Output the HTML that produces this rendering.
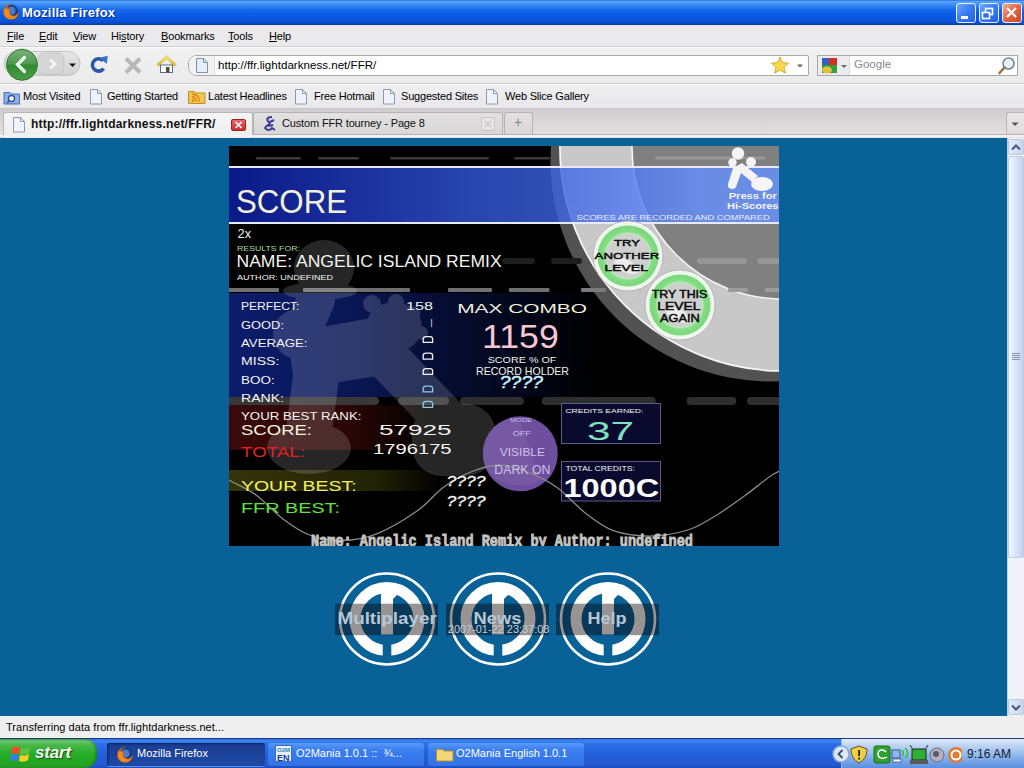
<!DOCTYPE html>
<html><head><meta charset="utf-8">
<style>
*{margin:0;padding:0;box-sizing:border-box}
html,body{width:1024px;height:768px;overflow:hidden;background:#086298;font-family:"Liberation Sans",sans-serif}
.a{position:absolute}
#title{left:0;top:0;width:1024px;height:25px;background:linear-gradient(#1a52d8 0,#5aa6fc 1px,#4a9af8 3px,#3282f2 6px,#1866e8 10px,#0a5ae4 15px,#0a56de 20px,#0a4ccc 23px,#0a3aa0 25px)}
#title .t{left:22px;top:5px;color:#fff;font-weight:bold;font-size:13px;text-shadow:1px 1px 0 #0a2c8c;letter-spacing:0.2px}
.wbtn{top:3px;width:20px;height:20px;border:1px solid #e8f0ff;border-radius:3px;background:linear-gradient(135deg,#6aa8ff,#3478f2 55%,#2460e0)}
#menu{left:0;top:25px;width:1024px;height:22px;background:#eae9ec;border-bottom:1px solid #d2d0d0}
#menu span{position:absolute;top:5px;font-size:11px;letter-spacing:-0.15px;color:#000}
#nav{left:0;top:47px;width:1024px;height:37px;background:linear-gradient(#f2f1f1,#ecebeb);border-bottom:1px solid #cfcdcd;box-shadow:inset 0 1px 0 #fbfbfb}
#bm{left:0;top:84px;width:1024px;height:25px;background:linear-gradient(#efeef0,#e8e7ea);border-bottom:1px solid #c8c6c6;box-shadow:inset 0 1px 0 #fbfbfb}
#bm span{position:absolute;top:6px;font-size:11px;letter-spacing:-0.2px;color:#000}
#tabs{left:0;top:109px;width:1024px;height:29px;background:linear-gradient(#cfcdcd,#e4e2e2)}
#content{left:0;top:138px;width:1007px;height:578px;background:#086298}
#sb{left:1007px;top:138px;width:17px;height:578px;background:#f0f3fa}
#status{left:0;top:716px;width:1024px;height:22px;background:#f0efef}
#status span{position:absolute;left:6px;top:5px;font-size:11px;letter-spacing:0.05px;color:#000}
#task{left:0;top:738px;width:1024px;height:30px;background:linear-gradient(#2f6de0 0,#3d86f5 2px,#2a6ee6 5px,#2460da 15px,#2358d0 26px,#1a48b8 30px);border-top:1px solid #1a3a80}
#game{left:229px;top:146px;width:550px;height:400px;background:#000;overflow:hidden}
</style></head><body>
<div id="title" class="a"><svg class="a" style="left:2px;top:3px" width="18" height="18"><circle cx="9" cy="9" r="7.5" fill="#1a3a8a"/><circle cx="9.5" cy="7.5" r="4" fill="#4a7ac8"/><path d="M9 1.5 C4 1.5 1.5 5.5 1.5 9 C1.5 13.5 5 16.5 9 16.5 C13.5 16.5 16.5 13 16.5 9.5 C15 12.5 12 13.5 10 12.5 C7 11.5 6.5 8.5 8 6.5 C6 6.5 5 5.5 5.5 4 C4.5 4.5 4 5 3.8 5.8 C4.5 3.5 6.5 1.8 9 1.5Z" fill="#f08a20" stroke="#c05a10" stroke-width="0.6"/></svg><div class="t a">Mozilla Firefox</div>
<div class="wbtn a" style="left:956px"></div><div class="wbtn a" style="left:979px"></div><div class="wbtn a" style="left:1002px;background:linear-gradient(135deg,#f4a890,#e0603c 55%,#c84a28)"></div>
<svg class="a" style="left:956px;top:3px" width="70" height="21"><rect x="5" y="13" width="7" height="3" fill="#fff"/><rect x="29.5" y="5.5" width="7" height="6" fill="none" stroke="#fff" stroke-width="1.6"/><rect x="26.5" y="9.5" width="7" height="6" fill="#2f70ee" stroke="#fff" stroke-width="1.6"/><path d="M51 5 L60 14 M60 5 L51 14" stroke="#fff" stroke-width="2.2"/></svg>
</div>
<div id="menu" class="a">
<span style="left:7px"><u>F</u>ile</span><span style="left:39px"><u>E</u>dit</span><span style="left:73px"><u>V</u>iew</span><span style="left:111px">Hi<u>s</u>tory</span><span style="left:161px"><u>B</u>ookmarks</span><span style="left:228px"><u>T</u>ools</span><span style="left:269px"><u>H</u>elp</span>
</div>
<div id="nav" class="a">
<svg class="a" style="left:0;top:0" width="190" height="36" viewBox="0 47 190 36">
<defs>
<linearGradient id="gb" x1="0" y1="0" x2="0" y2="1"><stop offset="0" stop-color="#7ab07a"/><stop offset="0.48" stop-color="#4d9a4d"/><stop offset="0.5" stop-color="#2f8a2f"/><stop offset="1" stop-color="#4aa04a"/></linearGradient>
<linearGradient id="gf" x1="0" y1="0" x2="0" y2="1"><stop offset="0" stop-color="#e6e6e6"/><stop offset="1" stop-color="#d2d2d2"/></linearGradient>
<linearGradient id="gh" x1="0" y1="0" x2="0" y2="1"><stop offset="0" stop-color="#f0dc80"/><stop offset="1" stop-color="#d8b840"/></linearGradient>
</defs>
<rect x="4" y="51.5" width="76" height="24" rx="12" fill="url(#gf)" stroke="#c4c4c4"/>
<rect x="38" y="53" width="26" height="21" rx="6" fill="#d6d6d6" stroke="#c8c8c8"/>
<path d="M50 59.5 L55 64 L50 68.5" stroke="#f4f4f4" stroke-width="2.6" fill="none"/>
<path d="M69 63.5 h7 l-3.5 3.5z" fill="#111"/>
<circle cx="22" cy="64.8" r="16.5" fill="#d8f0d8"/>
<circle cx="22" cy="64.8" r="15.5" fill="url(#gb)" stroke="#3d6d3d" stroke-width="1"/>
<path d="M24.5 57.5 L17.5 64.5 L24.5 71.5" stroke="#f0fff0" stroke-width="3.2" fill="none" stroke-linecap="round"/>
<path d="M103.2 60.8 A6.2 6.2 0 1 0 103.6 68.6" stroke="#2a58a6" stroke-width="3.6" fill="none"/>
<path d="M99.5 57.8 L107.8 55.8 L106.8 64 Z" fill="#3674c8"/>
<path d="M126 58.5 L140 72.5 M140 58.5 L126 72.5" stroke="#b8b8b8" stroke-width="4"/>
<path d="M157.5 65.5 L166.5 57 L175.5 65.5" stroke="url(#gh)" stroke-width="3.4" fill="none"/>
<rect x="160.5" y="65" width="12" height="7.5" fill="#fff" stroke="#5a6a8a" stroke-width="1"/>
<rect x="166" y="67" width="3.5" height="5.5" fill="#5a4a3a"/>
</svg>
<div class="a" style="left:188px;top:8px;width:621px;height:21px;background:#fff;border:1px solid #a8a8a8;border-radius:9px 2px 2px 9px"></div>
<div class="a" style="left:189px;top:9px;width:26px;height:19px;background:#f2f2f2;border-right:1px solid #ddd;border-radius:8px 0 0 8px"></div>
<svg class="a" style="left:195px;top:10px" width="14" height="17"><path d="M1.5 1.5 h7 l4 4 v10 h-11z" fill="#e6eefa" stroke="#8090a8"/><path d="M8.5 1.5 v4 h4" fill="none" stroke="#8090a8"/></svg>
<div class="a" style="left:218px;top:11px;font-size:11.6px;color:#000">http://ffr.lightdarkness.net/FFR/</div>
<svg class="a" style="left:769px;top:8px" width="40" height="20"><path d="M11 2 L13.6 7.6 L19.6 8.2 L15.1 12.2 L16.4 18.2 L11 15.1 L5.6 18.2 L6.9 12.2 L2.4 8.2 L8.4 7.6 Z" fill="#f6d84a" stroke="#c0a030" stroke-width="0.8"/><path d="M28 9.5 h6 l-3 3z" fill="#666"/></svg>
<div class="a" style="left:817px;top:8px;width:201px;height:21px;background:#fff;border:1px solid #a8a8a8"></div>
<div class="a" style="left:818px;top:9px;width:32px;height:19px;background:#ececec;border-right:1px solid #ddd"></div>
<svg class="a" style="left:820px;top:9px" width="30" height="19"><rect x="2" y="2" width="7" height="7" fill="#3060c0"/><rect x="9" y="2" width="8" height="14" fill="#d03020"/><rect x="2" y="9" width="15" height="8" fill="#30a040"/><ellipse cx="7" cy="14" rx="5" ry="3.5" fill="#e8c040"/><path d="M21 9 h6 l-3 3z" fill="#666"/></svg>
<div class="a" style="left:854px;top:11px;font-size:11.5px;color:#8a8a8a">Google</div>
<svg class="a" style="left:997px;top:9px" width="20" height="20"><circle cx="11.5" cy="7.5" r="5.5" fill="#e8f4fc" stroke="#6a8aa8" stroke-width="1.6"/><path d="M7.5 11.5 L2.5 17" stroke="#a07040" stroke-width="2.6" stroke-linecap="round"/></svg>
</div>
<div id="bm" class="a">
<svg class="a" style="left:3px;top:5px" width="18" height="16"><path d="M1 3.5 h6 l1.5 1.5 h8 v10 h-15.5z" fill="#8ab0e8" stroke="#4a70b0"/><circle cx="8.5" cy="9.5" r="3" fill="#fff" stroke="#3050a0" stroke-width="1.4"/><path d="M6.5 11.5 L4 14" stroke="#3050a0" stroke-width="1.6"/></svg>
<span style="left:23px">Most Visited</span>
<svg class="a" style="left:89px;top:4px" width="14" height="17"><path d="M1.5 1.5 h7 l4 4 v10.5 h-11z" fill="#eef3fc" stroke="#8a9ab8"/><path d="M8.5 1.5 v4 h4" fill="none" stroke="#8a9ab8"/></svg><span style="left:107px">Getting Started</span>
<svg class="a" style="left:188px;top:5px" width="18" height="15"><path d="M0.5 2.5 h6 l1.5 1.5 h9 v10.5 h-16.5z" fill="#f0c850" stroke="#c09020"/><circle cx="5" cy="11.5" r="1.3" fill="#e08010"/><path d="M4 8 a4 4 0 0 1 4.5 4.5 M4 5 a7 7 0 0 1 7.5 7.5" stroke="#e08010" stroke-width="1.4" fill="none"/></svg>
<span style="left:208px">Latest Headlines</span>
<svg class="a" style="left:294px;top:4px" width="14" height="17"><path d="M1.5 1.5 h7 l4 4 v10.5 h-11z" fill="#eef3fc" stroke="#8a9ab8"/><path d="M8.5 1.5 v4 h4" fill="none" stroke="#8a9ab8"/></svg><span style="left:314px">Free Hotmail</span>
<svg class="a" style="left:382px;top:4px" width="14" height="17"><path d="M1.5 1.5 h7 l4 4 v10.5 h-11z" fill="#eef3fc" stroke="#8a9ab8"/><path d="M8.5 1.5 v4 h4" fill="none" stroke="#8a9ab8"/></svg><span style="left:401px">Suggested Sites</span>
<svg class="a" style="left:485px;top:4px" width="14" height="17"><path d="M1.5 1.5 h7 l4 4 v10.5 h-11z" fill="#eef3fc" stroke="#8a9ab8"/><path d="M8.5 1.5 v4 h4" fill="none" stroke="#8a9ab8"/></svg><span style="left:505px">Web Slice Gallery</span>
</div>
<div id="tabs" class="a">
<div class="a" style="left:3px;top:3px;width:250px;height:26px;background:linear-gradient(#f6f5f5,#efeeee);border:1px solid #b8b6b6;border-bottom:none;border-radius:3px 3px 0 0"></div>
<svg class="a" style="left:12px;top:7px" width="14" height="17"><path d="M1.5 1.5 h7 l4 4 v10.5 h-11z" fill="#eef3fc" stroke="#8a9ab8"/><path d="M8.5 1.5 v4 h4" fill="none" stroke="#8a9ab8"/></svg>
<div class="a" style="left:31px;top:8px;font-size:12px;font-weight:bold;letter-spacing:0.2px;color:#111">http://ffr.lightdarkness.net/FFR/</div>
<div class="a" style="left:231px;top:10px;width:15px;height:12px;background:linear-gradient(#e86a6a,#c83030);border:1px solid #a02020;border-radius:2px"></div>
<svg class="a" style="left:231px;top:10px" width="15" height="12"><path d="M4.5 3 L10.5 9 M10.5 3 L4.5 9" stroke="#fff" stroke-width="1.6"/></svg>
<div class="a" style="left:253px;top:3px;width:250px;height:23px;background:linear-gradient(#e2e0e0,#d8d6d6);border:1px solid #b4b2b2;border-bottom:none;border-radius:3px 3px 0 0"></div>
<svg class="a" style="left:262px;top:6px" width="16" height="18"><path d="M10 2 C5 2 4 5 7 7 C10 9 4 10 3 13 C5 16 9 15 10 13 L13 15 M8 7 L12 5 M6 11 L11 10" stroke="#3a3a9a" stroke-width="2" fill="none"/></svg>
<div class="a" style="left:282px;top:8px;font-size:11px;letter-spacing:-0.15px;color:#111">Custom FFR tourney - Page 8</div>
<div class="a" style="left:481px;top:8px;width:14px;height:14px;border:1px solid #c8c6c6;border-radius:2px;background:#e6e4e4"></div>
<svg class="a" style="left:481px;top:8px" width="14" height="14"><path d="M4 4 L10 10 M10 4 L4 10" stroke="#c8c6c6" stroke-width="1.5"/></svg>
<div class="a" style="left:504px;top:3px;width:29px;height:23px;background:linear-gradient(#e2e0e0,#d8d6d6);border:1px solid #b4b2b2;border-bottom:none;border-radius:3px 3px 0 0"></div>
<div class="a" style="left:514px;top:5px;font-size:14px;color:#888">+</div>
<div class="a" style="left:1006px;top:3px;width:18px;height:23px;background:linear-gradient(#e8e6e6,#dedcdc);border:1px solid #b8b6b6;border-right:none;border-bottom:none;border-radius:3px 0 0 0"></div>
<svg class="a" style="left:1011px;top:13px" width="8" height="5"><path d="M0.5 0.5 h7 l-3.5 3.5z" fill="#555"/></svg>
<div class="a" style="left:253px;top:25px;width:771px;height:1px;background:#b4b2b2"></div><div class="a" style="left:0;top:26px;width:1024px;height:2px;background:#f2f2f2"></div>
</div>
<div id="content" class="a"></div>
<div id="sb" class="a">
<div class="a" style="left:0;top:0;width:1px;height:578px;background:#b8d4f0"></div>
<div class="a" style="left:1px;top:1px;width:16px;height:16px;border:1px solid #c0c8d8;border-radius:2px;background:linear-gradient(90deg,#e4ecfa,#c8d4ec)"></div>
<svg class="a" style="left:4px;top:6px" width="10" height="7"><path d="M1 5.5 L5 1.5 L9 5.5" stroke="#4a5a7a" stroke-width="2" fill="none"/></svg>
<div class="a" style="left:1px;top:18px;width:16px;height:402px;border:1px solid #c0cce4;border-radius:2px;background:linear-gradient(90deg,#f2f6fe,#d4e0f6 60%,#c4d2ee)"></div>
<div class="a" style="left:5px;top:215px;width:8px;height:7px;border-top:1px solid #8a96b0;border-bottom:1px solid #8a96b0"></div>
<div class="a" style="left:5px;top:217px;width:8px;height:3px;border-top:1px solid #8a96b0;border-bottom:1px solid #8a96b0"></div>
<div class="a" style="left:1px;top:561px;width:16px;height:16px;border:1px solid #c0c8d8;border-radius:2px;background:linear-gradient(90deg,#e4ecfa,#c8d4ec)"></div>
<svg class="a" style="left:4px;top:566px" width="10" height="7"><path d="M1 1.5 L5 5.5 L9 1.5" stroke="#4a5a7a" stroke-width="2" fill="none"/></svg>
</div><svg class="a" style="left:327px;top:564px" width="120" height="110" viewBox="327 564 120 110"><ellipse cx="387" cy="619" rx="47" ry="45.5" fill="none" stroke="#fff" stroke-width="2.6"/><ellipse cx="387" cy="619" rx="32" ry="31.5" fill="none" stroke="#fff" stroke-width="11"/><rect x="382.7" y="639" width="8.6" height="18" fill="#086298"/><rect x="381" y="585" width="12" height="49.5" fill="#fff"/><path d="M392 591.5 L399 593 L392 600Z" fill="#fff"/><rect x="335" y="603.7" width="103" height="31.5" fill="rgb(12,0,0)" opacity="0.42"/><text x="337.5" y="623.8" font-family="Liberation Sans" font-weight="bold" font-size="17.4" fill="#b6c8d6" textLength="99.19999999999999" lengthAdjust="spacingAndGlyphs">Multiplayer</text></svg><svg class="a" style="left:438px;top:564px" width="120" height="110" viewBox="438 564 120 110"><ellipse cx="498" cy="619" rx="47" ry="45.5" fill="none" stroke="#fff" stroke-width="2.6"/><ellipse cx="498" cy="619" rx="32" ry="31.5" fill="none" stroke="#fff" stroke-width="11"/><rect x="493.7" y="639" width="8.6" height="18" fill="#086298"/><rect x="492" y="585" width="12" height="49.5" fill="#fff"/><path d="M503 591.5 L510 593 L503 600Z" fill="#fff"/><rect x="446" y="603.7" width="103" height="31.5" fill="rgb(12,0,0)" opacity="0.42"/><text x="473.6" y="623.8" font-family="Liberation Sans" font-weight="bold" font-size="17.4" fill="#b6c8d6" textLength="47.69999999999993" lengthAdjust="spacingAndGlyphs">News</text><text x="447.8" y="633.4" font-family="Liberation Sans" font-size="10.3" fill="#c4ccd4" textLength="101.6" lengthAdjust="spacingAndGlyphs">2007-01-22 23:37:08</text></svg><svg class="a" style="left:548px;top:564px" width="120" height="110" viewBox="548 564 120 110"><ellipse cx="608" cy="619" rx="47" ry="45.5" fill="none" stroke="#fff" stroke-width="2.6"/><ellipse cx="608" cy="619" rx="32" ry="31.5" fill="none" stroke="#fff" stroke-width="11"/><rect x="603.7" y="639" width="8.6" height="18" fill="#086298"/><rect x="602" y="585" width="12" height="49.5" fill="#fff"/><path d="M613 591.5 L620 593 L613 600Z" fill="#fff"/><rect x="556" y="603.7" width="103" height="31.5" fill="rgb(12,0,0)" opacity="0.42"/><text x="587.5" y="623.8" font-family="Liberation Sans" font-weight="bold" font-size="17.4" fill="#b6c8d6" textLength="39.10000000000002" lengthAdjust="spacingAndGlyphs">Help</text></svg><svg class="a" style="left:229px;top:146px" width="550" height="400" viewBox="229 146 550 400">
<defs>
<linearGradient id="band" x1="229" y1="0" x2="779" y2="0" gradientUnits="userSpaceOnUse">
<stop offset="0" stop-color="#0c20aa"/><stop offset="0.311" stop-color="#2846cd"/><stop offset="0.456" stop-color="#3458da"/><stop offset="0.591" stop-color="#3c62e1"/><stop offset="0.855" stop-color="#648fff"/><stop offset="1" stop-color="#6491ff"/>
</linearGradient>
<linearGradient id="navy" x1="229" y1="0" x2="600" y2="0" gradientUnits="userSpaceOnUse">
<stop offset="0" stop-color="#0c1c6c"/><stop offset="0.35" stop-color="#091652"/><stop offset="0.6" stop-color="#050c30"/><stop offset="1" stop-color="#000"/>
</linearGradient>
<linearGradient id="red" x1="229" y1="0" x2="430" y2="0" gradientUnits="userSpaceOnUse">
<stop offset="0" stop-color="#3c0a0a"/><stop offset="0.6" stop-color="#2a0606"/><stop offset="1" stop-color="#000"/>
</linearGradient>
<linearGradient id="olive" x1="229" y1="0" x2="440" y2="0" gradientUnits="userSpaceOnUse">
<stop offset="0" stop-color="#34340a"/><stop offset="0.7" stop-color="#222206"/><stop offset="1" stop-color="#000"/>
</linearGradient>
<radialGradient id="grn" cx="0.5" cy="0.5" r="0.5">
<stop offset="0" stop-color="#cfcfcf"/><stop offset="0.62" stop-color="#cfcfcf"/><stop offset="0.64" stop-color="#b8f0b8"/><stop offset="0.7" stop-color="#86dc86"/><stop offset="0.86" stop-color="#7ad87a"/><stop offset="0.88" stop-color="#e8f8e8"/><stop offset="1" stop-color="#f4f4f4"/>
</radialGradient>
</defs>
<rect x="229" y="146" width="550" height="400" fill="#000"/>
<rect x="229" y="293" width="371" height="104" fill="url(#navy)"/>
<circle cx="771" cy="161" r="220.5" fill="#525252"/>
<circle cx="783" cy="148" r="223" fill="#c8c8c8" stroke="#f4f4f4" stroke-width="1.8"/>
<circle cx="783" cy="148" r="151" fill="#808080" stroke="#f4f4f4" stroke-width="1.6"/>
<rect x="256" y="157" width="45" height="2.5" rx="1.25" fill="#3a3a3a"/>
<rect x="318" y="157" width="41" height="2.5" rx="1.25" fill="#3a3a3a"/>
<rect x="390" y="157" width="99" height="2.5" rx="1.25" fill="#3a3a3a"/>
<rect x="514" y="157" width="36" height="2.5" rx="1.25" fill="#3a3a3a"/>
<rect x="655" y="156.5" width="111" height="3.0" rx="1.5" fill="#979797"/>
<rect x="502" y="258" width="33" height="6" rx="3.0" fill="#1e1e1e"/>
<rect x="551" y="258" width="31" height="6" rx="3.0" fill="#1e1e1e"/>
<rect x="697" y="258" width="50" height="6" rx="3.0" fill="#969696"/>
<rect x="757.5" y="258" width="32.5" height="6" rx="3.0" fill="#969696"/>
<rect x="220" y="288" width="59" height="4" rx="1" fill="#707070"/>
<rect x="303" y="288" width="107" height="4" rx="1" fill="#707070"/>
<rect x="448" y="288" width="44" height="4" rx="1" fill="#707070"/>
<rect x="509" y="288" width="40.5" height="4" rx="1" fill="#707070"/>
<rect x="581" y="288" width="25" height="4" rx="1" fill="#7a7a7a"/>
<rect x="728" y="288" width="20" height="4" rx="1" fill="#9c9c9c"/>
<rect x="765" y="288" width="25" height="4" rx="1" fill="#9c9c9c"/>
<rect x="220" y="397" width="159" height="8" rx="4.0" fill="#383838"/>
<rect x="398" y="397" width="51" height="8" rx="4.0" fill="#343434"/>
<rect x="460" y="397" width="64" height="8" rx="4.0" fill="#2e2e2e"/>
<rect x="541.6" y="397" width="114.10000000000002" height="8" rx="4.0" fill="#2e2e2e"/>
<rect x="686.6" y="397" width="49.69999999999993" height="8" rx="4.0" fill="#2e2e2e"/>
<rect x="747" y="397" width="43" height="8" rx="4.0" fill="#2e2e2e"/>
<rect x="229" y="405" width="201" height="45" fill="url(#red)"/>
<rect x="229" y="470" width="211" height="21" fill="url(#olive)"/>
<g opacity="0.15" fill="#fff" stroke="#fff" stroke-linecap="round" stroke-linejoin="round"><ellipse cx="324" cy="268" rx="30" ry="28" stroke="none"/><ellipse cx="320" cy="291" rx="37" ry="9" stroke="none"/><line x1="316" y1="300" x2="302" y2="332" stroke-width="38"/><circle cx="298" cy="334" r="25" stroke="none"/><line x1="322" y1="340" x2="378" y2="330" stroke-width="26"/><ellipse cx="394" cy="327" rx="28" ry="25" stroke="none"/><circle cx="372" cy="304" r="9" stroke="none"/><circle cx="396" cy="302" r="8" stroke="none"/><circle cx="413" cy="314" r="7.5" stroke="none"/><circle cx="421" cy="333" r="7" stroke="none"/><path d="M290 340 L385 335 L400 370 L340 380 L295 375 Z" stroke-width="4"/><line x1="385" y1="356" x2="452" y2="426" stroke-width="44"/><line x1="318" y1="362" x2="308" y2="438" stroke-width="46"/><ellipse cx="309" cy="448" rx="42" ry="26" stroke="none"/><rect x="412" y="404" width="84" height="72" rx="30" stroke="none"/></g>
<rect x="229" y="168" width="550" height="54" fill="url(#band)" opacity="0.8"/>
<rect x="229" y="166" width="550" height="2" fill="#e8eaf8"/>
<rect x="229" y="222" width="550" height="2" fill="#e8eaf8"/>
<rect x="561.5" y="403.5" width="99" height="40" fill="#0a0a2e" stroke="#5c5c80" stroke-width="1"/>
<rect x="561.5" y="461.5" width="99" height="39.5" fill="#0a0a2e" stroke="#5c5c80" stroke-width="1"/>
<circle cx="520.3" cy="453.8" r="37.5" fill="#6e4e9e"/>
<path d="M 483 445 C 490 420 510 418 520 420 L 540 480 C 520 492 490 485 483 460 Z" fill="#fff" opacity="0.06"/>
<path d="M229,480 C234.7,483.5 247.0,488.5 256,495 C265.0,501.5 274.1,512.3 283,519 C291.9,525.7 299.7,531.4 309.5,535 C319.3,538.6 330.8,540.7 342,540.5 C353.2,540.3 364.2,538.7 376.7,533.8 C389.2,528.9 405.8,518.8 417,511 C428.2,503.2 434.9,493.5 443.8,487 C452.8,480.5 461.3,475.7 470.7,472 C480.1,468.3 490.0,464.8 500,465 C510.0,465.2 521.3,469.6 530.9,473.4 C540.5,477.2 548.8,481.5 557.7,488 C566.7,494.5 575.7,505.4 584.6,512.4 C593.5,519.4 602.5,525.9 611.4,529.8 C620.3,533.6 629.1,534.6 638,535.5 C646.9,536.4 656.0,536.2 665,535 C674.0,533.8 683.0,532.0 692,528.5 C701.0,525.0 709.8,519.3 718.8,513.7 C727.8,508.1 736.8,501.5 745.7,495 C754.7,488.5 765.1,479.6 772.5,474.8 C779.9,470.0 785.4,468.8 790,466" fill="none" stroke="#8a8a8a" stroke-width="1.3"/>
<circle cx="628" cy="256" r="35" fill="url(#grn)" stroke="#b0a0b0" stroke-width="0.7"/>
<path d="M614 262 C622 254 632 260 640 272 C632 276 620 274 614 262Z" fill="#f0f0f0" opacity="0.9"/>
<circle cx="680" cy="305" r="35" fill="url(#grn)" stroke="#b0a0b0" stroke-width="0.7"/>
<path d="M666 311 C674 303 684 309 692 321 C684 325 672 323 666 311Z" fill="#f0f0f0" opacity="0.9"/>
<g fill="#f4f4f4"><circle cx="738" cy="153.5" r="6.2"/><circle cx="732.5" cy="162.5" r="4.2"/><circle cx="751" cy="162" r="5"/><path d="M733 168 L742 163 L758 176 L752 182 L741 173 L736 187 C733 191 727 189 728 184 Z"/><ellipse cx="762" cy="184" rx="11" ry="7"/></g>
<text x="236.0" y="213.3" font-family="Liberation Sans" font-size="32.99" font-weight="normal" fill="#f2f2dc" textLength="111.0" lengthAdjust="spacingAndGlyphs" >SCORE</text>
<text x="237.6" y="237.5" font-family="Liberation Sans" font-size="12.71" font-weight="normal" fill="#f4f4f0" textLength="13.4" lengthAdjust="spacingAndGlyphs" >2x</text>
<text x="237.0" y="250.8" font-family="Liberation Sans" font-size="7.27" font-weight="normal" fill="#a8d8a0" textLength="63.0" lengthAdjust="spacingAndGlyphs" >RESULTS FOR:</text>
<text x="236.5" y="267.2" font-family="Liberation Sans" font-size="15.99" font-weight="normal" fill="#f4f4f0" textLength="265.2" lengthAdjust="spacingAndGlyphs" >NAME: ANGELIC ISLAND REMIX</text>
<text x="237.0" y="279.7" font-family="Liberation Sans" font-size="7.70" font-weight="normal" fill="#f4f4f0" textLength="96.0" lengthAdjust="spacingAndGlyphs" >AUTHOR: UNDEFINED</text>
<text x="241.0" y="309.8" font-family="Liberation Sans" font-size="11.34" font-weight="normal" fill="#f4f4f0" textLength="58.3" lengthAdjust="spacingAndGlyphs" >PERFECT:</text>
<text x="241.0" y="328.5" font-family="Liberation Sans" font-size="10.90" font-weight="normal" fill="#f4f4f0" textLength="43.0" lengthAdjust="spacingAndGlyphs" >GOOD:</text>
<text x="241.0" y="346.5" font-family="Liberation Sans" font-size="10.90" font-weight="normal" fill="#f4f4f0" textLength="66.5" lengthAdjust="spacingAndGlyphs" >AVERAGE:</text>
<text x="241.0" y="364.5" font-family="Liberation Sans" font-size="10.90" font-weight="normal" fill="#f4f4f0" textLength="38.4" lengthAdjust="spacingAndGlyphs" >MISS:</text>
<text x="241.0" y="383.5" font-family="Liberation Sans" font-size="10.90" font-weight="normal" fill="#f4f4f0" textLength="33.7" lengthAdjust="spacingAndGlyphs" >BOO:</text>
<text x="241.0" y="401.5" font-family="Liberation Sans" font-size="10.90" font-weight="normal" fill="#f4f4f0" textLength="43.0" lengthAdjust="spacingAndGlyphs" >RANK:</text>
<text x="406.0" y="310.0" font-family="Liberation Sans" font-size="11.19" font-weight="normal" fill="#f4f4f0" textLength="27.0" lengthAdjust="spacingAndGlyphs" >158</text>
<text x="430.5" y="327.0" font-family="Liberation Sans" font-size="10.17" font-weight="normal" fill="#f4f4f0" textLength="2.0" lengthAdjust="spacingAndGlyphs" >I</text>
<path d="M423.2 342.4 V339 Q423.2 336.6 426 336.6 H430 Q432.6 336.6 432.6 339 V342.4 Z" fill="none" stroke="#f4f4f0" stroke-width="1.3"/>
<path d="M423.2 359.09999999999997 V355.6 Q423.2 353.20000000000005 426 353.20000000000005 H430 Q432.6 353.20000000000005 432.6 355.6 V359.09999999999997 Z" fill="none" stroke="#f4f4f0" stroke-width="1.3"/>
<path d="M423.2 374.4 V371 Q423.2 368.6 426 368.6 H430 Q432.6 368.6 432.6 371 V374.4 Z" fill="none" stroke="#f4f4f0" stroke-width="1.3"/>
<path d="M423.2 391.9 V388.5 Q423.2 386.1 426 386.1 H430 Q432.6 386.1 432.6 388.5 V391.9 Z" fill="none" stroke="#8ac8f0" stroke-width="1.3"/>
<path d="M423.2 407.4 V403.7 Q423.2 401.3 426 401.3 H430 Q432.6 401.3 432.6 403.7 V407.4 Z" fill="none" stroke="#8ac8f0" stroke-width="1.3"/>
<text x="457.2" y="312.7" font-family="Liberation Sans" font-size="13.66" font-weight="normal" fill="#f2f2dc" textLength="129.8" lengthAdjust="spacingAndGlyphs" >MAX COMBO</text>
<text x="482.0" y="347.8" font-family="Liberation Sans" font-size="34.01" font-weight="normal" fill="#f4c8d2" textLength="76.8" lengthAdjust="spacingAndGlyphs" >1159</text>
<text x="487.7" y="363.2" font-family="Liberation Sans" font-size="9.88" font-weight="normal" fill="#f2f2e4" textLength="68.7" lengthAdjust="spacingAndGlyphs" >SCORE % OF</text>
<text x="476.0" y="375.2" font-family="Liberation Sans" font-size="10.47" font-weight="normal" fill="#f2f2e4" textLength="93.0" lengthAdjust="spacingAndGlyphs" >RECORD HOLDER</text>
<text x="499.4" y="388.4" font-family="Liberation Sans" font-size="15.84" font-weight="normal" fill="#c8f0ff" textLength="43.6" lengthAdjust="spacingAndGlyphs" stroke="#c8f0ff" stroke-width="0.4" font-style="italic">????</text>
<text x="241.0" y="419.6" font-family="Liberation Sans" font-size="10.17" font-weight="normal" fill="#f4f4f0" textLength="120.4" lengthAdjust="spacingAndGlyphs" >YOUR BEST RANK:</text>
<text x="241.0" y="434.8" font-family="Liberation Sans" font-size="15.26" font-weight="normal" fill="#f2f2dc" textLength="71.0" lengthAdjust="spacingAndGlyphs" >SCORE:</text>
<text x="379.0" y="434.8" font-family="Liberation Sans" font-size="15.26" font-weight="normal" fill="#f4f4f0" textLength="72.6" lengthAdjust="spacingAndGlyphs" >57925</text>
<text x="241.0" y="457.0" font-family="Liberation Sans" font-size="15.12" font-weight="normal" fill="#e02028" textLength="64.0" lengthAdjust="spacingAndGlyphs" >TOTAL:</text>
<text x="373.0" y="453.6" font-family="Liberation Sans" font-size="15.41" font-weight="normal" fill="#f4f4f0" textLength="78.6" lengthAdjust="spacingAndGlyphs" >1796175</text>
<text x="241.0" y="491.0" font-family="Liberation Sans" font-size="15.26" font-weight="normal" fill="#f0f060" textLength="115.7" lengthAdjust="spacingAndGlyphs" >YOUR BEST:</text>
<text x="241.0" y="513.3" font-family="Liberation Sans" font-size="15.26" font-weight="normal" fill="#60e040" textLength="99.0" lengthAdjust="spacingAndGlyphs" >FFR BEST:</text>
<text x="446.5" y="485.5" font-family="Liberation Sans" font-size="15.55" font-weight="normal" fill="#f4f4f0" textLength="38.9" lengthAdjust="spacingAndGlyphs" stroke="#f4f4f0" stroke-width="0.4" font-style="italic">????</text>
<text x="446.5" y="505.6" font-family="Liberation Sans" font-size="15.55" font-weight="normal" fill="#f4f4f0" textLength="38.9" lengthAdjust="spacingAndGlyphs" stroke="#f4f4f0" stroke-width="0.4" font-style="italic">????</text>
<text x="510.0" y="422.0" font-family="Liberation Sans" font-size="5.81" font-weight="normal" fill="#c8b8e8" textLength="22.0" lengthAdjust="spacingAndGlyphs" >MODE</text>
<text x="512.7" y="436.0" font-family="Liberation Sans" font-size="7.99" font-weight="normal" fill="#d0c0ec" textLength="18.0" lengthAdjust="spacingAndGlyphs" >OFF</text>
<text x="499.8" y="455.7" font-family="Liberation Sans" font-size="11.19" font-weight="normal" fill="#d0c0ec" textLength="45.2" lengthAdjust="spacingAndGlyphs" >VISIBLE</text>
<text x="494.3" y="474.0" font-family="Liberation Sans" font-size="12.35" font-weight="normal" fill="#d0c0ec" textLength="56.1" lengthAdjust="spacingAndGlyphs" >DARK ON</text>
<text x="565.4" y="412.8" font-family="Liberation Sans" font-size="5.96" font-weight="normal" fill="#f4f4f0" textLength="78.0" lengthAdjust="spacingAndGlyphs" >CREDITS EARNED:</text>
<text x="587.0" y="440.0" font-family="Liberation Sans" font-size="25.73" font-weight="normal" fill="#80e0c4" textLength="47.0" lengthAdjust="spacingAndGlyphs" >37</text>
<text x="565.4" y="471.0" font-family="Liberation Sans" font-size="6.40" font-weight="normal" fill="#f4f4f0" textLength="69.6" lengthAdjust="spacingAndGlyphs" >TOTAL CREDITS:</text>
<text x="563.5" y="496.7" font-family="Liberation Sans" font-size="26.60" font-weight="bold" fill="#ffffff" textLength="95.7" lengthAdjust="spacingAndGlyphs" >1000C</text>
<text x="728.7" y="198.8" font-family="Liberation Sans" font-size="8.33" font-weight="bold" fill="#f4f4f4" textLength="48.1" lengthAdjust="spacingAndGlyphs" >Press for</text>
<text x="727.0" y="208.8" font-family="Liberation Sans" font-size="9.44" font-weight="bold" fill="#f4f4f4" textLength="51.5" lengthAdjust="spacingAndGlyphs" >Hi-Scores</text>
<text x="576.5" y="220.2" font-family="Liberation Sans" font-size="7.27" font-weight="normal" fill="#e8ecf8" textLength="193.2" lengthAdjust="spacingAndGlyphs" >SCORES ARE RECORDED AND COMPARED</text>
<text x="614.0" y="246.3" font-family="Liberation Sans" font-size="9.16" font-weight="normal" fill="#0a0a0a" textLength="26.0" lengthAdjust="spacingAndGlyphs" stroke="#0a0a0a" stroke-width="0.45">TRY</text>
<text x="594.6" y="259.2" font-family="Liberation Sans" font-size="9.74" font-weight="normal" fill="#0a0a0a" textLength="64.6" lengthAdjust="spacingAndGlyphs" stroke="#0a0a0a" stroke-width="0.45">ANOTHER</text>
<text x="604.6" y="270.8" font-family="Liberation Sans" font-size="9.01" font-weight="normal" fill="#0a0a0a" textLength="43.3" lengthAdjust="spacingAndGlyphs" stroke="#0a0a0a" stroke-width="0.45">LEVEL</text>
<text x="651.7" y="297.6" font-family="Liberation Sans" font-size="10.17" font-weight="normal" fill="#0a0a0a" textLength="55.6" lengthAdjust="spacingAndGlyphs" stroke="#0a0a0a" stroke-width="0.45">TRY THIS</text>
<text x="657.2" y="310.1" font-family="Liberation Sans" font-size="10.17" font-weight="normal" fill="#0a0a0a" textLength="43.2" lengthAdjust="spacingAndGlyphs" stroke="#0a0a0a" stroke-width="0.45">LEVEL</text>
<text x="660.0" y="321.8" font-family="Liberation Sans" font-size="10.90" font-weight="normal" fill="#0a0a0a" textLength="39.8" lengthAdjust="spacingAndGlyphs" stroke="#0a0a0a" stroke-width="0.45">AGAIN</text>
<text x="311" y="545.5" font-family="Liberation Mono" font-size="17" font-weight="bold" fill="#c4c4c4" stroke="#c4c4c4" stroke-width="0.9" textLength="382" lengthAdjust="spacingAndGlyphs">Name: Angelic Island Remix by Author: undefined</text>
</svg>
<div id="status" class="a"><span>Transferring data from ffr.lightdarkness.net...</span></div>
<div id="task" class="a">
<div class="a" style="left:0;top:0;width:97px;height:29px;border-radius:0 12px 12px 0;background:linear-gradient(#3a9a3a 0,#6ac86a 2px,#48b848 6px,#2aae2a 14px,#20a820 22px,#2a9a2a 29px);box-shadow:inset -2px 0 2px rgba(0,0,0,0.2)"></div>
<svg class="a" style="left:10px;top:6px" width="22" height="20"><path d="M2 3 C5 1 8 2 10 3 L9 9 C7 8 4 8 1 9Z" fill="#f05020"/><path d="M11 3 C14 4 17 4 20 2 L19 8 C16 10 13 10 10 9Z" fill="#60c040"/><path d="M1 10 C4 9 7 9 9 10 L8 16 C6 15 3 15 0 16Z" fill="#3080f0"/><path d="M10 10 C13 11 16 11 19 9 L18 15 C15 17 12 17 9 16Z" fill="#f8d020"/></svg>
<div class="a" style="left:35px;top:4px;font-size:17px;font-weight:bold;font-style:italic;color:#f4f8f0;letter-spacing:-0.2px;text-shadow:1px 1px 1px #1a4a1a">start</div>
<div class="a" style="left:107px;top:4px;width:158px;height:23px;border-radius:3px;background:linear-gradient(#1a3c90,#1e4aa4);box-shadow:inset 1px 1px 2px #0a2060,0 1px 0 #5a90f0"></div>
<svg class="a" style="left:116px;top:7px" width="18" height="18"><circle cx="9" cy="9" r="7.5" fill="#1a3a8a"/><circle cx="9.5" cy="7.5" r="4" fill="#4a7ac8"/><path d="M9 1.5 C4 1.5 1.5 5.5 1.5 9 C1.5 13.5 5 16.5 9 16.5 C13.5 16.5 16.5 13 16.5 9.5 C15 12.5 12 13.5 10 12.5 C7 11.5 6.5 8.5 8 6.5 C6 6.5 5 5.5 5.5 4 C4.5 4.5 4 5 3.8 5.8 C4.5 3.5 6.5 1.8 9 1.5Z" fill="#f08a20" stroke="#c05a10" stroke-width="0.6"/></svg>
<div class="a" style="left:137px;top:8px;font-size:11px;color:#fff">Mozilla Firefox</div>
<div class="a" style="left:268px;top:4px;width:156px;height:23px;border-radius:3px;background:linear-gradient(#5a9af8,#3a7ef0 30%,#3272e4)"></div>
<svg class="a" style="left:275px;top:6px" width="18" height="18"><rect x="0.5" y="0.5" width="16" height="16" fill="#e8f0ff" stroke="#3a70b0"/><text x="2" y="7" font-size="6" font-family="Liberation Sans" font-weight="bold" fill="#2a8ab0">O2M</text><text x="2" y="15.5" font-size="9" font-family="Liberation Sans" font-weight="bold" fill="#1a3aa0">EN</text></svg>
<div class="a" style="left:296px;top:8px;font-size:11px;color:#fff">O2Mania 1.0.1 ::&nbsp; &#190;...</div>
<div class="a" style="left:428px;top:4px;width:156px;height:23px;border-radius:3px;background:linear-gradient(#5a9af8,#3a7ef0 30%,#3272e4)"></div>
<svg class="a" style="left:436px;top:8px" width="18" height="15"><path d="M0.5 2.5 h6 l1.5 1.5 h9 v10 h-16.5z" fill="#f4d878" stroke="#b89030"/></svg>
<div class="a" style="left:456px;top:8px;font-size:11px;color:#fff">O2Mania English 1.0.1</div>
<div class="a" style="left:841px;top:0;width:183px;height:29px;background:linear-gradient(#e4eefa 0,#c0d6f4 20%,#8cb4ea 60%,#5a8ee0 100%);border-left:1px solid #9ab8e8"></div>
<svg class="a" style="left:832px;top:5px" width="130" height="22">
<circle cx="9" cy="10" r="8" fill="#dce8f8" stroke="#8aa6d8" stroke-width="1.5"/><path d="M10.5 6 L6.5 10 L10.5 14" stroke="#3a4a6a" stroke-width="1.8" fill="none"/>
<path d="M27 2 L35 5 C35 12 32 16 27 19 C22 16 19 12 19 5Z" fill="#f0d040" stroke="#5a5030"/><rect x="26.2" y="6" width="1.8" height="6" fill="#222"/><rect x="26.2" y="13.5" width="1.8" height="2" fill="#222"/>
<rect x="42" y="2" width="16" height="17" rx="2" fill="#30a030" stroke="#1a701a"/><path d="M54 8 C52 5 46 5 46 10 C46 15 52 15 55 13" stroke="#fff" stroke-width="1.5" fill="none"/>
<rect x="60" y="6" width="8" height="8" fill="#8ab8e8" stroke="#3a5a9a"/><rect x="61" y="15" width="8" height="3" fill="#fff" stroke="#3a5a9a" stroke-width="0.8"/><path d="M70 6 a4 4 0 0 1 0 6 M73 4 a6 6 0 0 1 0 10" stroke="#30c030" stroke-width="1.4" fill="none"/>
<rect x="80" y="5" width="14" height="11" fill="#30b030" stroke="#222"/><rect x="78" y="16" width="18" height="4" fill="#5a5a5a"/><path d="M80 4 L78 1 M94 4 L96 1" stroke="#222"/>
<circle cx="105" cy="11" r="7" fill="#b0b0c0" stroke="#6a6a7a"/><circle cx="104" cy="10" r="3" fill="#5a5a6a"/>
<circle cx="124" cy="11" r="8" fill="#e07a30"/><circle cx="124" cy="11" r="4.5" fill="none" stroke="#fff" stroke-width="2"/>
</svg>
<div class="a" style="left:967px;top:8px;font-size:12px;color:#101830">9:16 AM</div>
</div>
</body></html>
